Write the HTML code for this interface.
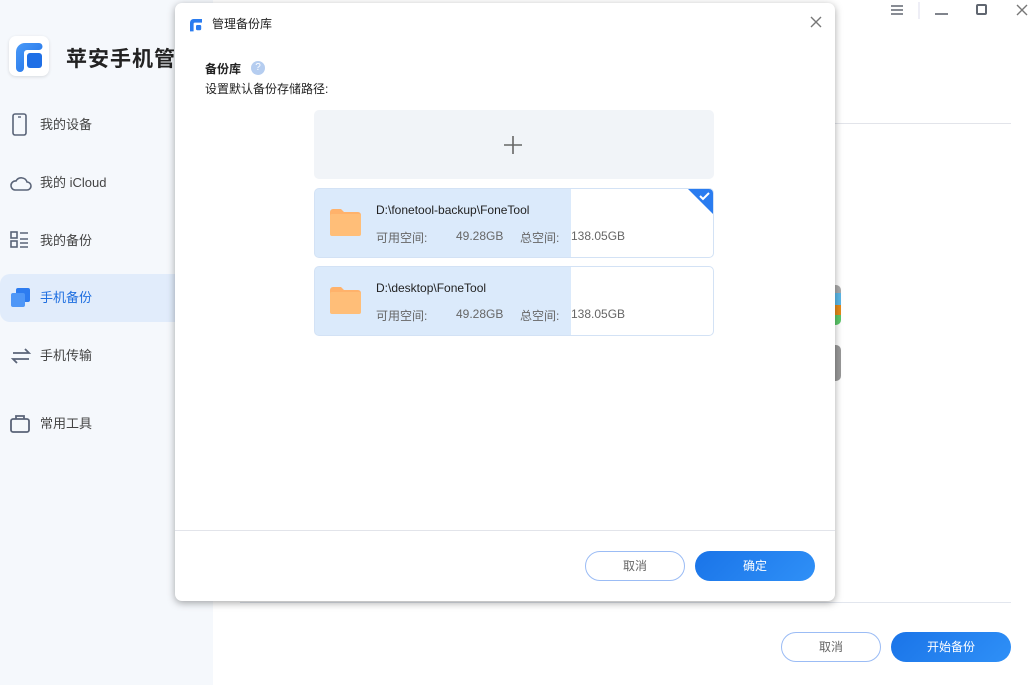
<!DOCTYPE html>
<html><head><meta charset="utf-8"><style>
*{margin:0;padding:0;box-sizing:border-box}
body{width:1036px;height:685px;overflow:hidden;position:relative;background:#fff;font-family:"Liberation Sans","Noto Sans CJK SC",sans-serif;color:#333}
.side{position:absolute;left:0;top:0;width:213px;height:685px;background:#f5f8fc}
.logo{position:absolute;left:9px;top:36px;width:40px;height:40px;background:#fff;border-radius:7px;box-shadow:0 1px 3px rgba(0,0,0,.12)}
.brand{position:absolute;left:66px;top:43px;font-size:21px;font-weight:bold;color:#222;letter-spacing:1px}
.nav{position:absolute;left:0;width:213px;height:48px;font-size:13px;color:#444}
.nav span{position:absolute;left:40px;top:13px}
.nav svg{position:absolute;left:9px;top:12px}
.nav.act{background:#e1ecfb;border-radius:10px 0 0 10px}
.nav.act span{color:#1f6fe0}
.btn{position:absolute;border-radius:15px;font-size:12px;text-align:center;line-height:28px}
.b1{border:1px solid #9bbcf5;color:#666;background:#fff}
.b2{background:linear-gradient(135deg,#1a74e8,#2f90f7);color:#fff;line-height:30px}
.dlg{position:absolute;left:175px;top:3px;width:660px;height:598px;background:#fff;border-radius:7px;box-shadow:0 2px 8px rgba(0,0,0,.35)}
.card{position:absolute;left:139px;width:400px;height:70px;border:1px solid #d3e2f5;border-radius:5px;background:linear-gradient(90deg,#dbeafb 0,#dbeafb 256px,#fff 256px);overflow:hidden}
.card .p{position:absolute;left:61px;top:14px;font-size:12px;color:#222}
.card .s{position:absolute;top:40px;font-size:12px;color:#666}
</style></head><body>
<div class="side">
<div class="logo"><svg width="40" height="40" viewBox="0 0 40 40"><defs><linearGradient id="g" x1="0" y1="0" x2="1" y2="1"><stop offset="0" stop-color="#4a9af8"/><stop offset="1" stop-color="#1f6fe6"/></linearGradient></defs><path d="M7 32V16a9 9 0 0 1 9-9h14a3 3 0 0 1 0 7H18a3 3 0 0 0-3 3v15a4 4 0 0 1-8 0z" fill="url(#g)"/><rect x="18" y="17" width="15" height="15" rx="3" fill="#1f6fe6"/></svg></div>
<div class="brand">苹安手机管</div>
<div class="nav" style="top:101px"><svg width="20" height="24"><rect x="4" y="1" width="13" height="21" rx="2" fill="none" stroke="#5a6478" stroke-width="1.6"/><line x1="9" y1="4" x2="12" y2="4" stroke="#5a6478" stroke-width="1.4"/></svg><span>我的设备</span></div>
<div class="nav" style="top:159px"><svg width="24" height="24"><path d="M6 19h12a4 4 0 0 0 0-8 6 6 0 0 0-11-1 4.5 4.5 0 0 0-1 9z" fill="none" stroke="#5a6478" stroke-width="1.6"/></svg><span>我的 iCloud</span></div>
<div class="nav" style="top:217px"><svg width="24" height="24"><rect x="2" y="3" width="6" height="6" fill="none" stroke="#5a6478" stroke-width="1.6"/><rect x="2" y="12" width="6" height="6" fill="none" stroke="#5a6478" stroke-width="1.6"/><path d="M11 4h8M11 10h8M11 14h8M11 18h8" stroke="#5a6478" stroke-width="1.6"/></svg><span>我的备份</span></div>
<div class="nav act" style="top:274px"><svg width="24" height="24"><rect x="7" y="2" width="14" height="14" rx="2" fill="#2d7cf0"/><rect x="2" y="7" width="14" height="14" rx="2" fill="#4f97f7"/></svg><span>手机备份</span></div>
<div class="nav" style="top:332px"><svg width="24" height="24"><path d="M4 9h16l-4-4M20 15H4l4 4" fill="none" stroke="#5a6478" stroke-width="1.8"/></svg><span>手机传输</span></div>
<div class="nav" style="top:400px"><svg width="24" height="24"><rect x="2" y="7" width="18" height="13" rx="2" fill="none" stroke="#5a6478" stroke-width="1.8"/><path d="M7 7V4h8v3" fill="none" stroke="#5a6478" stroke-width="1.8"/></svg><span>常用工具</span></div>
</div>
<div style="position:absolute;left:830px;top:123px;width:181px;height:1px;background:#e2e4ea"></div>
<div style="position:absolute;left:240px;top:602px;width:771px;height:1px;background:#e2e6ee"></div>
<svg style="position:absolute;left:888px;top:0" width="148" height="22"><path d="M3 6h12M3 10h12M3 14h12" stroke="#606670" stroke-width="1.6"/><line x1="31" y1="2" x2="31" y2="19" stroke="#dde"/><line x1="47" y1="14" x2="60" y2="14" stroke="#606670" stroke-width="1.6"/><rect x="89" y="5" width="9" height="9" rx="1" fill="none" stroke="#606670" stroke-width="2"/><path d="M129 5l10 10M139 5l-10 10" stroke="#777" stroke-width="1.4"/></svg>
<div style="position:absolute;left:830px;top:285px;width:11px;height:40px;border-radius:0 5px 5px 0;background:linear-gradient(#aaa 0,#aaa 20%,#5bb8e8 20%,#5bb8e8 50%,#e58a1a 50%,#e58a1a 75%,#5cc86a 75%)"></div>
<div style="position:absolute;left:830px;top:345px;width:11px;height:36px;border-radius:0 5px 5px 0;background:#999"></div>
<div class="btn b1" style="left:781px;top:632px;width:100px;height:30px">取消</div>
<div class="btn b2" style="left:891px;top:632px;width:120px;height:30px;font-size:12px">开始备份</div>
<div class="dlg">
<svg style="position:absolute;left:13px;top:14px" width="16" height="16" viewBox="0 0 40 40"><path d="M5 36V14a9 9 0 0 1 9-9h21v9H17a3 3 0 0 0-3 3v19z" fill="#2a7cf0"/><rect x="20" y="20" width="13" height="13" rx="3" fill="#2a7cf0"/></svg>
<div style="position:absolute;left:37px;top:12px;font-size:12px;color:#222">管理备份库</div>
<svg style="position:absolute;left:634px;top:12px" width="14" height="14"><path d="M2 2l10 10M12 2L2 12" stroke="#777" stroke-width="1.4"/></svg>
<div style="position:absolute;left:30px;top:57px;font-size:12px;font-weight:bold;color:#222">备份库</div>
<div style="position:absolute;left:76px;top:58px;width:14px;height:14px;border-radius:50%;background:#b5cdf0;color:#fff;font-size:10px;text-align:center;line-height:14px">?</div>
<div style="position:absolute;left:30px;top:77px;font-size:12px;color:#222">设置默认备份存储路径:</div>
<div style="position:absolute;left:139px;top:107px;width:400px;height:69px;background:#f1f4f8;border-radius:5px"><svg style="position:absolute;left:190px;top:26px" width="18" height="18"><path d="M9 0v18M0 9h18" stroke="#666" stroke-width="1.6"/></svg></div>
<div class="card" style="top:185px">
<svg style="position:absolute;left:15px;top:20px" width="31" height="27"><path d="M0 3a3 3 0 0 1 3-3h8l3 3h14a3 3 0 0 1 3 3v18a3 3 0 0 1-3 3H3a3 3 0 0 1-3-3z" fill="#ffb26b"/><rect x="0" y="5" width="31" height="22" rx="2" fill="#ffbe78"/></svg>
<div class="p">D:\fonetool-backup\FoneTool</div>
<div class="s" style="left:61px">可用空间:</div><div class="s" style="left:141px">49.28GB</div><div class="s" style="left:205px">总空间:</div><div class="s" style="left:256px">138.05GB</div>
<svg style="position:absolute;right:-1px;top:-1px" width="27" height="27"><path d="M0 0h27v27z" fill="#2a7cf0"/><path d="M13 8l3 3 6-6" fill="none" stroke="#fff" stroke-width="2"/></svg>
</div>
<div class="card" style="top:263px">
<svg style="position:absolute;left:15px;top:20px" width="31" height="27"><path d="M0 3a3 3 0 0 1 3-3h8l3 3h14a3 3 0 0 1 3 3v18a3 3 0 0 1-3 3H3a3 3 0 0 1-3-3z" fill="#ffb26b"/><rect x="0" y="5" width="31" height="22" rx="2" fill="#ffbe78"/></svg>
<div class="p">D:\desktop\FoneTool</div>
<div class="s" style="left:61px">可用空间:</div><div class="s" style="left:141px">49.28GB</div><div class="s" style="left:205px">总空间:</div><div class="s" style="left:256px">138.05GB</div>
</div>
<div style="position:absolute;left:0;top:527px;width:660px;height:1px;background:#e2e4ea"></div>
<div class="btn b1" style="left:410px;top:548px;width:100px;height:30px">取消</div>
<div class="btn b2" style="left:520px;top:548px;width:120px;height:30px">确定</div>
</div>
</body></html>
